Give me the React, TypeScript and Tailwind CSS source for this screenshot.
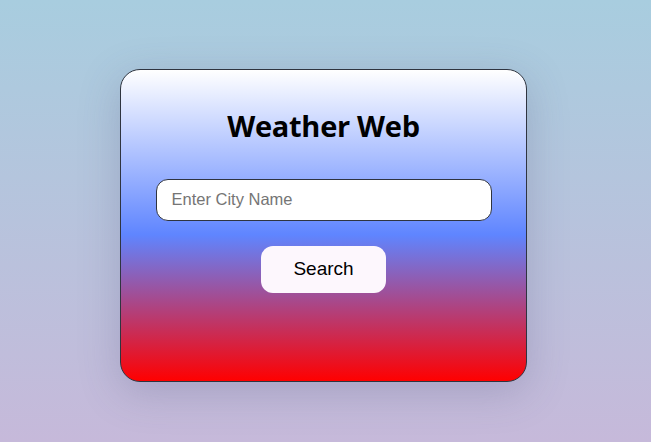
import React, { useState } from "react";

export default function App() {
  const [city, setCity] = useState("");

  return (
    <div className="min-h-screen w-full flex items-center justify-center bg-[linear-gradient(to_bottom,#a8cddf,#c6b9da)]">
      <div className="w-[407px] h-[313px] mt-[8px] mr-[4px] rounded-[20px] border border-[#2f3440] bg-[linear-gradient(to_bottom,#ffffff_0%,#5f85ff_53%,#ff0000_100%)] shadow-[0_10px_40px_rgba(80,80,120,0.25)] flex flex-col items-center">
        <h1 className="mt-[39px] text-[29px] leading-[34px] font-bold text-black font-['Open_Sans',sans-serif] tracking-[-0.3px]">
          Weather Web
        </h1>
        <input
          type="text"
          value={city}
          onChange={(e) => setCity(e.target.value)}
          placeholder="Enter City Name"
          className="mt-[36px] w-[336px] h-[42px] rounded-[12px] border border-[#2f3440] bg-white px-[15px] text-[16.5px] font-['Liberation_Sans',Arial,sans-serif] text-black placeholder:text-[#757575] outline-none"
        />
        <button className="mt-[25px] w-[125px] h-[47px] rounded-[12px] bg-[#fdf7fd] text-[19px] text-black font-['Liberation_Sans',Arial,sans-serif]">
          Search
        </button>
      </div>
    </div>
  );
}
